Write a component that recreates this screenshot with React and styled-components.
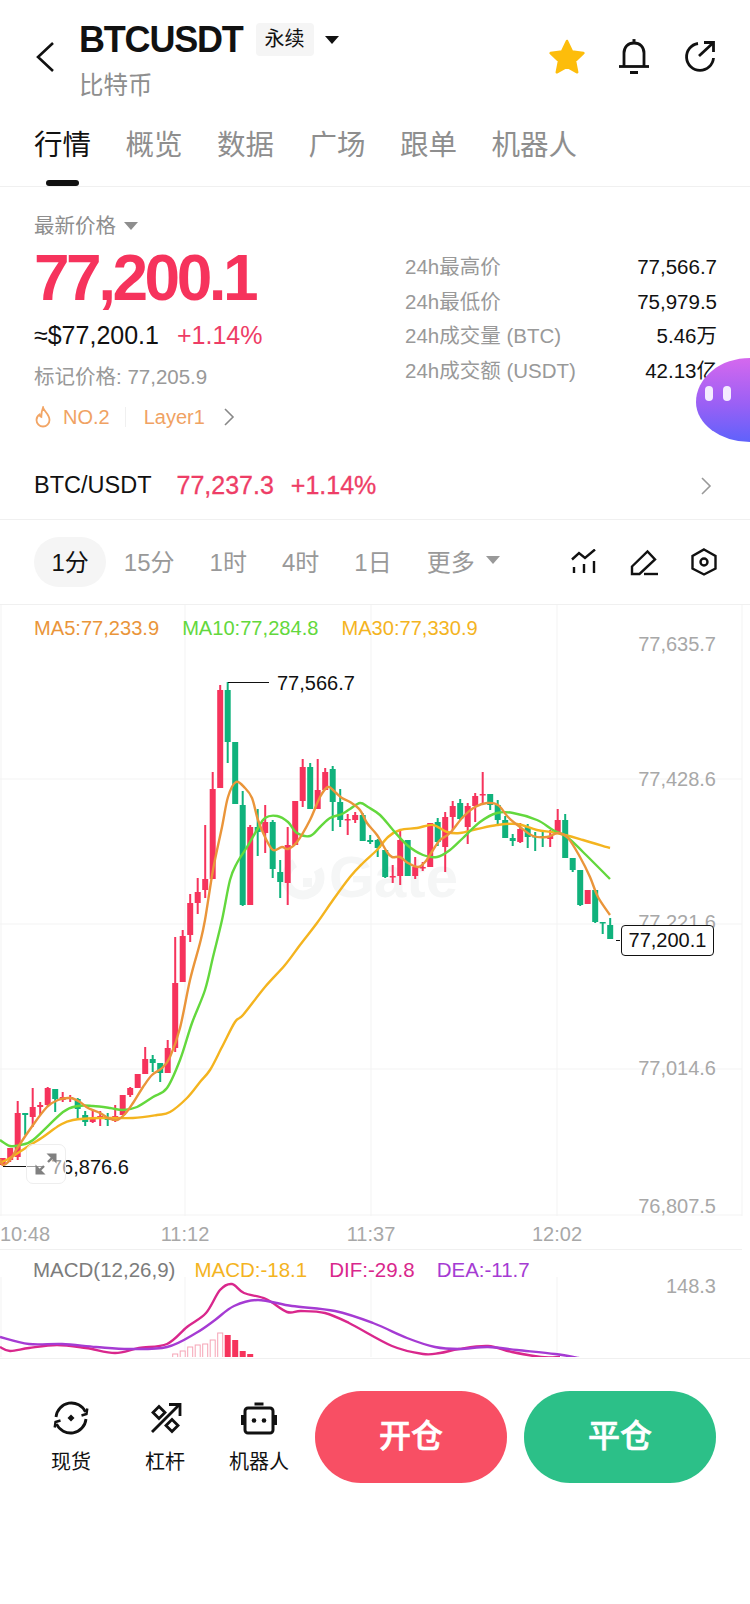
import styled, { createGlobalStyle } from "styled-components";

const RED = "#f6335c";
const GREEN = "#10b27c";
const GRID = "#f3f3f3";

// [colour, wick top, body top, body bottom, wick bottom]
const candles = [
  ["r", 1158, 1158, 1165, 1166], ["r", 1148, 1148, 1160, 1162], ["r", 1101, 1113, 1157, 1160], ["g", 1113, 1113, 1115, 1135],
  ["r", 1088, 1107, 1117, 1127], ["r", 1102, 1105, 1107, 1115], ["r", 1087, 1088, 1105, 1106], ["g", 1089, 1089, 1099, 1112],
  ["r", 1092, 1097, 1100, 1102], ["r", 1095, 1097, 1098, 1102], ["g", 1098, 1099, 1109, 1119], ["g", 1111, 1115, 1122, 1126],
  ["r", 1110, 1118, 1122, 1123], ["r", 1111, 1116, 1118, 1126], ["g", 1113, 1117, 1120, 1126], ["r", 1105, 1116, 1121, 1122],
  ["r", 1095, 1095, 1115, 1115], ["r", 1087, 1088, 1095, 1097], ["r", 1074, 1074, 1088, 1088], ["r", 1047, 1059, 1074, 1074],
  ["g", 1055, 1059, 1063, 1072], ["g", 1063, 1063, 1073, 1082], ["r", 1040, 1048, 1073, 1073], ["r", 937, 983, 1048, 1052],
  ["r", 930, 936, 982, 982], ["r", 894, 903, 935, 942], ["r", 878, 892, 903, 914], ["r", 825, 879, 890, 898],
  ["r", 772, 789, 879, 879], ["r", 685, 690, 788, 788], ["g", 682, 690, 742, 763], ["g", 742, 742, 804, 804],
  ["g", 791, 805, 905, 906], ["r", 825, 827, 905, 905], ["g", 809, 827, 832, 856], ["r", 805, 822, 833, 853],
  ["g", 820, 822, 869, 878], ["g", 860, 872, 882, 898], ["r", 827, 845, 883, 905], ["r", 801, 801, 845, 845],
  ["r", 759, 767, 801, 807], ["g", 763, 767, 809, 809], ["r", 759, 790, 809, 809], ["r", 768, 772, 790, 790],
  ["g", 766, 769, 802, 831], ["g", 789, 802, 820, 827], ["r", 814, 819, 820, 835], ["r", 812, 815, 820, 823],
  ["g", 813, 815, 841, 841], ["g", 835, 840, 842, 844], ["g", 839, 840, 848, 857], ["g", 850, 850, 877, 878],
  ["r", 865, 876, 877, 883], ["r", 830, 840, 876, 885], ["g", 840, 840, 876, 876], ["r", 857, 867, 876, 879],
  ["r", 862, 867, 868, 871], ["r", 823, 823, 867, 867], ["g", 818, 822, 842, 846], ["r", 812, 817, 847, 872],
  ["r", 801, 806, 817, 830], ["g", 799, 803, 819, 820], ["r", 803, 806, 827, 844], ["r", 793, 796, 806, 822],
  ["r", 772, 794, 795, 805], ["g", 794, 794, 805, 810], ["g", 800, 805, 820, 824], ["g", 816, 820, 838, 838],
  ["g", 834, 838, 841, 846], ["r", 823, 829, 842, 843], ["g", 824, 827, 837, 848], ["g", 832, 836, 837, 851],
  ["g", 832, 836, 838, 847], ["r", 830, 836, 839, 847], ["r", 809, 820, 833, 833], ["g", 814, 820, 858, 858],
  ["g", 858, 858, 870, 872], ["g", 870, 870, 905, 906], ["r", 890, 890, 904, 904], ["g", 890, 890, 922, 923],
  ["g", 922, 922, 923, 934], ["g", 918, 925, 939, 939],
];

const ma5 = [
  [0, 1159], [3, 1165], [10, 1160], [18, 1147], [33, 1125], [47, 1107], [58, 1100], [70, 1098], [80, 1102], [88, 1108],
  [100, 1113], [108, 1118], [117, 1120], [125, 1114], [133, 1103], [143, 1087], [152, 1075], [162, 1068], [170, 1057],
  [180, 1028], [190, 980], [200, 943], [205, 920], [213, 870], [222, 827], [228, 797], [236, 782], [245, 788], [252, 798],
  [258, 820], [265, 837], [273, 850], [282, 847], [288, 849], [297, 842], [310, 820], [320, 797], [328, 787], [335, 792],
  [342, 798], [350, 802], [360, 810], [367, 823], [377, 835], [387, 852], [392, 857], [400, 857], [408, 863], [418, 867],
  [425, 862], [433, 850], [440, 840], [450, 833], [463, 817], [475, 807], [487, 803], [498, 805], [508, 817], [520, 827],
  [533, 836], [547, 837], [558, 833], [568, 838], [580, 857], [590, 877], [598, 897], [610, 915],
];

const ma10 = [
  [0, 1140], [10, 1146], [20, 1145], [33, 1140], [63, 1112], [78, 1106], [93, 1106], [110, 1108], [123, 1110], [137, 1107],
  [153, 1097], [167, 1088], [180, 1060], [192, 1023], [205, 990], [213, 957], [222, 920], [230, 880], [237, 863], [247, 847],
  [257, 830], [265, 818], [277, 816], [288, 822], [297, 833], [310, 836], [320, 827], [330, 818], [342, 814], [350, 809],
  [360, 803], [368, 807], [380, 815], [393, 830], [407, 845], [423, 855], [437, 857], [450, 850], [463, 838], [480, 822],
  [497, 813], [513, 813], [537, 820], [553, 830], [567, 837], [583, 852], [610, 879],
];

const ma30 = [
  [0, 1163], [10, 1158], [27, 1147], [43, 1137], [60, 1125], [73, 1120], [100, 1118], [133, 1118], [157, 1115], [170, 1112],
  [187, 1098], [200, 1082], [210, 1070], [222, 1047], [235, 1022], [243, 1015], [265, 987], [285, 965], [300, 945], [317, 923],
  [333, 900], [350, 877], [363, 863], [377, 850], [388, 837], [400, 830], [417, 828], [433, 825], [447, 832], [460, 833],
  [477, 829], [497, 825], [517, 824], [537, 830], [557, 833], [583, 840], [610, 848],
];

const dif = [
  [0, 1347], [10, 1351], [29, 1348], [57, 1345], [86, 1348], [115, 1353], [139, 1348], [167, 1344], [187, 1327], [206, 1313],
  [220, 1290], [232, 1284], [244, 1293], [266, 1299], [287, 1312], [301, 1311], [325, 1313], [349, 1323], [392, 1346], [423, 1354],
  [440, 1353], [459, 1349], [488, 1346], [512, 1352], [541, 1357], [560, 1357],
];

const dea = [
  [0, 1337], [29, 1344], [62, 1344], [96, 1347], [129, 1349], [167, 1347], [196, 1333], [215, 1320], [234, 1306], [258, 1300],
  [292, 1306], [335, 1311], [373, 1323], [407, 1338], [435, 1347], [459, 1349], [488, 1347], [517, 1350], [555, 1354], [579, 1358],
];

const histTops = [1354, 1351, 1347, 1345, 1344, 1340, 1333, 1335, 1340, 1351, 1354, 1357];

const candleX = (i) => 2.7 + i * 7.5;

// catmull-rom through the sampled points
function smooth(pts) {
  let d = `M${pts[0][0]} ${pts[0][1]}`;
  for (let i = 0; i < pts.length - 1; i++) {
    const p0 = pts[i - 1] || pts[i];
    const p1 = pts[i];
    const p2 = pts[i + 1];
    const p3 = pts[i + 2] || p2;
    const c1x = p1[0] + (p2[0] - p0[0]) / 6;
    const c1y = p1[1] + (p2[1] - p0[1]) / 6;
    const c2x = p2[0] - (p3[0] - p1[0]) / 6;
    const c2y = p2[1] - (p3[1] - p1[1]) / 6;
    d += ` C${c1x.toFixed(1)} ${c1y.toFixed(1)} ${c2x.toFixed(1)} ${c2y.toFixed(1)} ${p2[0]} ${p2[1]}`;
  }
  return d;
}

const stats = [
  ["24h最高价", "77,566.7"],
  ["24h最低价", "75,979.5"],
  ["24h成交量 (BTC)", "5.46万"],
  ["24h成交额 (USDT)", "42.13亿"],
];

const tabs = ["行情", "概览", "数据", "广场", "跟单", "机器人"];
const periods = ["1分", "15分", "1时", "4时", "1日"];
const priceLabels = [["77,635.7", 644], ["77,428.6", 779], ["77,221.6", 922], ["77,014.6", 1068], ["76,807.5", 1206]];

function PriceChart() {
  return (
    <ChartSvg viewBox="0 605 750 611" width="750" height="611">
      {[1, 185, 371, 557, 742].map((x) => (
        <line key={x} x1={x} x2={x} y1="605" y2="1216" stroke={GRID} />
      ))}
      {[779, 924, 1069, 1215].map((y) => (
        <line key={y} x1="0" x2="742" y1={y} y2={y} stroke={GRID} />
      ))}

      <circle cx="303" cy="878" r="17" fill="none" stroke="#f5f6f6" strokeWidth="9" strokeDasharray="80 27" transform="rotate(-30 303 878)" />
      <rect x="303" y="878" width="9" height="9" fill="#f5f6f6" />
      <Watermark x="329" y="897">Gate</Watermark>

      {priceLabels.map(([label, y]) => (
        <AxisLabel key={label} x="716" y={y + 7}>{label}</AxisLabel>
      ))}

      {candles.map(([c, wt, bt, bb, wb], i) => (
        <g key={i} fill={c === "r" ? RED : GREEN}>
          <rect x={candleX(i) - 1} y={wt} width="2" height={wb - wt} />
          <rect x={candleX(i) - 3} y={bt} width="6" height={Math.max(bb - bt, 1.5)} />
        </g>
      ))}

      <path d={smooth(ma30)} fill="none" stroke="#f4b41f" strokeWidth="2.4" />
      <path d={smooth(ma10)} fill="none" stroke="#63d83d" strokeWidth="2.4" />
      <path d={smooth(ma5)} fill="none" stroke="#ea953a" strokeWidth="2.4" />

      <line x1="228" x2="269" y1="682.5" y2="682.5" stroke="#111" />
      <MarkLabel x="277" y="690">77,566.7</MarkLabel>
      <line x1="3" x2="44" y1="1166.5" y2="1166.5" stroke="#111" />
      <MarkLabel x="51" y="1174">76,876.6</MarkLabel>
      <line x1="616" x2="620" y1="940.5" y2="940.5" stroke="#111" />
    </ChartSvg>
  );
}

function MacdChart() {
  return (
    <ChartSvg viewBox="0 1250 750 107" width="750" height="107">
      {[1, 185, 371, 557].map((x) => (
        <line key={x} x1={x} x2={x} y1="1277" y2="1358" stroke={GRID} />
      ))}
      <AxisLabel x="716" y="1293">148.3</AxisLabel>
      {histTops.map((top, i) =>
        i < 7 ? (
          <rect key={i} x={candleX(i + 23) - 2.5} y={top} width="5" height={1358 - top} fill="#fff" stroke="#f6a4b6" />
        ) : (
          <rect key={i} x={candleX(i + 23) - 3} y={top} width="6" height={1358 - top} fill={RED} />
        )
      )}
      <path d={smooth(dif)} fill="none" stroke="#d9278c" strokeWidth="2.4" />
      <path d={smooth(dea)} fill="none" stroke="#a53bd3" strokeWidth="2.4" />
    </ChartSvg>
  );
}

export default function App() {
  return (
    <Page>
      <GlobalStyle />

      <TopBar>
        <svg width="18" height="30" viewBox="0 0 18 30" fill="none" stroke="#111" strokeWidth="2.6">
          <path d="M17 1 2 15l15 14" />
        </svg>
        <TitleCol>
          <TitleRow>
            <Symbol>BTCUSDT</Symbol>
            <Badge>永续</Badge>
            <Caret $size={7} $color="#111" />
          </TitleRow>
          <SubTitle>比特币</SubTitle>
        </TitleCol>
        <TopActions>
          <StarIcon width="38" height="36" viewBox="0 0 38 36">
            <path d="M19 3l5 10.6 11.4 1.5-8.4 7.9 2.2 11.3L19 28.7 8.8 34.3 11 23 2.6 15.1 14 13.6z" fill="#fdbd0b" stroke="#fdbd0b" strokeWidth="2.5" strokeLinejoin="round" />
          </StarIcon>
          <svg width="32" height="36" viewBox="0 0 32 36" fill="none" stroke="#111" strokeWidth="2.8">
            <path d="M6 28V15C6 9 10 5 16 5s10 4 10 10v13" />
            <path d="M1 28.5h30" />
            <path d="M14.5 2.5h3" />
            <path d="M12 34.5h8" strokeWidth="3" />
          </svg>
          <svg width="32" height="32" viewBox="0 0 32 32" fill="none" stroke="#111" strokeWidth="2.8">
            <path d="M14 3.5A13.5 13.5 0 1 0 29.5 18" />
            <path d="M15 16 29 3" />
            <path d="M20 2.5h9.5V12" />
          </svg>
        </TopActions>
      </TopBar>

      <TabBar>
        {tabs.map((t, i) => (
          <Tab key={t} $active={i === 0}>{t}</Tab>
        ))}
      </TabBar>

      <PriceSection>
        <PriceCol>
          <PriceCaption>
            最新价格
            <Caret $size={7} $color="#8e8e8e" />
          </PriceCaption>
          <BigPrice>77,200.1</BigPrice>
          <FiatRow>
            <span>≈$77,200.1</span>
            <Change>+1.14%</Change>
          </FiatRow>
          <MarkPrice>标记价格: 77,205.9</MarkPrice>
          <TagRow>
            <svg width="16" height="22" viewBox="0 0 16 22" fill="none" stroke="#f2a565" strokeWidth="1.8">
              <path d="M8 1.5c.6 3.5 6.5 6.5 6.5 12.5a6.5 6.5 0 0 1-13 0C1.5 11.5 3 9.5 4.5 8.5c.3 1.6 1 2.3 1.8 2.5C6.300 7.5 7 4 8 1.5z" />
            </svg>
            <TagText>NO.2</TagText>
            <TagDivider />
            <TagText>Layer1</TagText>
            <svg width="12" height="20" viewBox="0 0 12 20" fill="none" stroke="#888" strokeWidth="1.6">
              <path d="M2 2l8 8-8 8" />
            </svg>
          </TagRow>
        </PriceCol>
        <StatList>
          {stats.map(([k, v]) => (
            <StatRow key={k}>
              <StatKey>{k}</StatKey>
              <StatValue>{v}</StatValue>
            </StatRow>
          ))}
        </StatList>
        <Bot>
          <BotEye />
          <BotEye />
        </Bot>
      </PriceSection>

      <PairRow>
        <PairName>BTC/USDT</PairName>
        <PairPrice>77,237.3</PairPrice>
        <PairPrice>+1.14%</PairPrice>
        <PairChevron width="12" height="20" viewBox="0 0 12 20" fill="none" stroke="#999" strokeWidth="1.6">
          <path d="M2 2l8 8-8 8" />
        </PairChevron>
      </PairRow>

      <PeriodRow>
        {periods.map((p, i) => (
          <Period key={p} $active={i === 0}>{p}</Period>
        ))}
        <Period>
          更多
          <MoreCaret $size={7} $color="#999" />
        </Period>
        <ChartTools>
          <svg width="26" height="26" viewBox="0 0 26 26" fill="none" stroke="#111" strokeWidth="2.4">
            <path d="M1 10.5l7-6.5 6 5 10-8.5" />
            <path d="M3 18v6M13 15v9M23 12v12" />
          </svg>
          <svg width="28" height="28" viewBox="0 0 28 28" fill="none" stroke="#111" strokeWidth="2.4">
            <path d="M2 18.5 17.5 3.5l7.5 8L9.5 26H2z" />
            <path d="M14 26h14" />
          </svg>
          <svg width="26" height="28" viewBox="0 0 26 28" fill="none" stroke="#111" strokeWidth="2.4">
            <path d="M13 1.5 24.5 8v12.5L13 26.5 1.5 20.5V8z" />
            <circle cx="13" cy="14" r="3.5" />
          </svg>
        </ChartTools>
      </PeriodRow>

      <ChartArea>
        <Legend>
          <LegendItem $color="#ea953a">MA5:77,233.9</LegendItem>
          <LegendItem $color="#63d83d">MA10:77,284.8</LegendItem>
          <LegendItem $color="#f4b41f">MA30:77,330.9</LegendItem>
        </Legend>
        <PriceChart />
        <ExpandButton>
          <svg width="24" height="24" viewBox="0 0 24 24" fill="#808080" stroke="#808080" strokeWidth="2.4">
            <path d="M14 10l6-6" fill="none" />
            <path d="M12.5 1.5h10v10z" stroke="none" />
            <path d="M10 14l-6 6" fill="none" />
            <path d="M11.5 22.5h-10v-10z" stroke="none" />
          </svg>
        </ExpandButton>
        <LastPrice>77,200.1</LastPrice>
      </ChartArea>

      <TimeAxis>
        <TimeLabel $first>10:48</TimeLabel>
        <TimeLabel>11:12</TimeLabel>
        <TimeLabel>11:37</TimeLabel>
        <TimeLabel>12:02</TimeLabel>
      </TimeAxis>

      <MacdArea>
        <MacdLegend>
          <LegendItem $color="#7c7c7c">MACD(12,26,9)</LegendItem>
          <LegendItem $color="#f4b41f">MACD:-18.1</LegendItem>
          <LegendItem $color="#d9278c">DIF:-29.8</LegendItem>
          <LegendItem $color="#a53bd3">DEA:-11.7</LegendItem>
        </MacdLegend>
        <MacdChart />
      </MacdArea>

      <BottomBar>
        <ToolItem>
          <svg width="40" height="40" viewBox="0 0 40 40" fill="none" stroke="#111" strokeWidth="2.8">
            <path d="M5 19A15.5 15.5 0 0 1 34.5 14" />
            <path d="M30.5 17.5l5-1.5 .8-5.5" strokeWidth="2.4" />
            <path d="M35 21A15.5 15.5 0 0 1 5.5 26" />
            <path d="M9.5 22.5l-5 1.5-.8 5.5" strokeWidth="2.4" />
            <path d="M20 16.5l3.5 3.5-3.5 3.5-3.5-3.5z" fill="#111" stroke="none" />
          </svg>
          <ToolLabel>现货</ToolLabel>
        </ToolItem>
        <ToolItem>
          <svg width="40" height="40" viewBox="0 0 40 40" fill="none" stroke="#111" strokeWidth="2.8">
            <path d="M7 34 34 7" />
            <path d="M24 6.5h11V18" />
            <path d="M14 8.5l6 6-6 6-6-6z" />
            <path d="M27 21.5l6 6-6 6-6-6z" />
          </svg>
          <ToolLabel>杠杆</ToolLabel>
        </ToolItem>
        <ToolItem>
          <svg width="40" height="40" viewBox="0 0 40 40" fill="none" stroke="#111" strokeWidth="3">
            <rect x="6" y="10" width="28" height="25" rx="3" />
            <path d="M15.5 6h9" />
            <path d="M3.5 17v10M36.5 17v10" />
            <circle cx="15" cy="22.5" r="2.3" fill="#111" stroke="none" />
            <circle cx="25" cy="22.5" r="2.3" fill="#111" stroke="none" />
          </svg>
          <ToolLabel>机器人</ToolLabel>
        </ToolItem>
        <TradeButton $color="#f84f64">开仓</TradeButton>
        <TradeButton $color="#2cc088">平仓</TradeButton>
      </BottomBar>
    </Page>
  );
}

const GlobalStyle = createGlobalStyle`
  html, body {
    margin: 0;
    padding: 0;
    background: #ffffff;
  }
  body {
    font-family: "Liberation Sans", "Noto Sans CJK SC", sans-serif;
    color: #111111;
  }
`;

const Page = styled.div`
  width: 750px;
  height: 1604px;
  overflow: hidden;
  background: #ffffff;
  display: flex;
  flex-direction: column;
`;

const TopBar = styled.header`
  display: flex;
  height: 112px;
  box-sizing: border-box;
  padding: 23px 34px 0 36px;

  > svg {
    margin-top: 19px;
  }
`;

const TitleCol = styled.div`
  margin-left: 25px;
`;

const TitleRow = styled.div`
  display: flex;
  align-items: center;
  height: 33px;
`;

const Symbol = styled.div`
  font-size: 36px;
  font-weight: 700;
  letter-spacing: -1.2px;
  line-height: 33px;
`;

const Badge = styled.div`
  margin-left: 13px;
  margin-right: 3px;
  width: 58px;
  height: 33px;
  line-height: 33px;
  border-radius: 4px;
  background: #f5f5f5;
  font-size: 20px;
  text-align: center;
`;

const Caret = styled.i`
  display: inline-block;
  width: 0;
  height: 0;
  margin-left: 8px;
  border-left: ${(p) => p.$size}px solid transparent;
  border-right: ${(p) => p.$size}px solid transparent;
  border-top: ${(p) => p.$size * 1.2}px solid ${(p) => p.$color};
`;

const MoreCaret = styled(Caret)`
  margin-left: 11px;
`;

const SubTitle = styled.div`
  margin-top: 13px;
  font-size: 24.5px;
  line-height: 34px;
  color: #8e8e8e;
`;

const TopActions = styled.div`
  margin-left: auto;
  margin-top: 15px;
  height: 36px;
  display: flex;
  align-items: center;
  gap: 34px;
`;

const StarIcon = styled.svg`
  margin-right: -2px;
`;

const TabBar = styled.nav`
  display: flex;
  gap: 34.5px;
  height: 75px;
  box-sizing: border-box;
  padding-left: 34px;
  border-bottom: 1px solid #f0f0f0;
`;

const Tab = styled.div`
  position: relative;
  padding-top: 13px;
  font-size: 28.5px;
  line-height: 40px;
  color: ${(p) => (p.$active ? "#111111" : "#8e8e8e")};

  &::after {
    content: "";
    display: ${(p) => (p.$active ? "block" : "none")};
    position: absolute;
    left: 12px;
    bottom: 0;
    width: 33px;
    height: 6px;
    border-radius: 3px;
    background: #111111;
  }
`;

const PriceSection = styled.section`
  position: relative;
  display: flex;
  justify-content: space-between;
  height: 265px;
  box-sizing: border-box;
  padding: 25px 33px 0 34px;
`;

const PriceCol = styled.div`
  display: flex;
  flex-direction: column;
`;

const PriceCaption = styled.div`
  display: flex;
  align-items: center;
  font-size: 20.5px;
  line-height: 28px;
  color: #8e8e8e;
`;

const BigPrice = styled.div`
  margin-top: 2px;
  font-size: 64px;
  line-height: 72px;
  font-weight: 700;
  letter-spacing: -3.5px;
  color: ${RED};
`;

const FiatRow = styled.div`
  display: flex;
  gap: 18px;
  margin-top: 5px;
  font-size: 25px;
  line-height: 32px;
`;

const Change = styled.span`
  color: #ee3d66;
`;

const MarkPrice = styled.div`
  margin-top: 12px;
  font-size: 20.5px;
  line-height: 28px;
  color: #999999;
`;

const TagRow = styled.div`
  display: flex;
  align-items: center;
  height: 28px;
  margin-top: 12px;
  padding-left: 1px;

  > svg:last-child {
    margin-left: 18px;
  }
`;

const TagText = styled.span`
  margin-left: 12px;
  font-size: 20px;
  color: #f0a263;

  & + & {
    margin-left: 17px;
  }
`;

const TagDivider = styled.i`
  width: 1px;
  height: 20px;
  margin-left: 15px;
  margin-right: 6px;
  background: #f0f0f0;
`;

const StatList = styled.div`
  width: 312px;
  margin-top: 38px;
`;

const StatRow = styled.div`
  display: flex;
  justify-content: space-between;
  height: 34.6px;
  line-height: 34px;
  font-size: 20.5px;
`;

const StatKey = styled.span`
  color: #999999;
`;

const StatValue = styled.span`
  color: #111111;
`;

const Bot = styled.div`
  position: absolute;
  right: 0;
  top: 171px;
  width: 54px;
  height: 84px;
  box-sizing: border-box;
  padding: 28px 0 0 9px;
  display: flex;
  gap: 10px;
  border-radius: 54px 0 0 54px / 44px 0 0 40px;
  background: linear-gradient(180deg, #d568ee 0%, #9a60f5 55%, #5f62fb 100%);
`;

const BotEye = styled.i`
  width: 8px;
  height: 15px;
  border-radius: 4px;
  background: #f4ecff;
`;

const PairRow = styled.div`
  display: flex;
  align-items: center;
  height: 68px;
  box-sizing: border-box;
  padding: 0 38px 0 34px;
  border-bottom: 1px solid #f0f0f0;
`;

const PairName = styled.span`
  margin-right: 8px;
  font-size: 23.5px;
`;

const PairPrice = styled.span`
  margin-left: 17px;
  font-size: 25px;
  color: #ee3d66;
  -webkit-text-stroke: 0.3px #ee3d66;
`;

const PairChevron = styled.svg`
  margin-left: auto;
`;

const PeriodRow = styled.div`
  display: flex;
  align-items: center;
  height: 85px;
  box-sizing: border-box;
  padding: 0 33px 0 34px;
  border-bottom: 1px solid #f0f0f0;
`;

const Period = styled.div`
  display: flex;
  align-items: center;
  height: 50px;
  box-sizing: border-box;
  padding: 0 17.5px 4px;
  border-radius: 25px;
  font-size: 24px;
  color: ${(p) => (p.$active ? "#111111" : "#999999")};
  background: ${(p) => (p.$active ? "#f5f5f5" : "transparent")};
`;

const ChartTools = styled.div`
  margin-left: auto;
  display: flex;
  align-items: center;
  gap: 33px;
`;

const ChartArea = styled.div`
  position: relative;
  height: 611px;
`;

const ChartSvg = styled.svg`
  display: block;
`;

const Legend = styled.div`
  position: absolute;
  top: 9px;
  left: 34px;
  display: flex;
  gap: 23px;
  font-size: 20.1px;
  line-height: 28px;
`;

const LegendItem = styled.span`
  color: ${(p) => p.$color};
`;

const AxisLabel = styled.text`
  font-size: 20px;
  fill: #a8a8a8;
  text-anchor: end;
`;

const MarkLabel = styled.text`
  font-size: 20px;
  fill: #111111;
`;

const Watermark = styled.text`
  font-size: 58px;
  font-weight: 700;
  fill: #f5f6f6;
`;

const ExpandButton = styled.div`
  position: absolute;
  left: 26px;
  top: 539px;
  width: 40px;
  height: 40px;
  box-sizing: border-box;
  display: flex;
  align-items: center;
  justify-content: center;
  border: 1px solid #eeeeee;
  border-radius: 7px;
  background: rgba(255, 255, 255, 0.6);
`;

const LastPrice = styled.div`
  position: absolute;
  left: 621px;
  top: 320px;
  width: 93px;
  height: 31px;
  box-sizing: border-box;
  border: 1px solid #111111;
  border-radius: 4px;
  background: #ffffff;
  font-size: 20px;
  line-height: 29px;
  text-align: center;
`;

const TimeAxis = styled.div`
  display: flex;
  height: 34px;
  box-sizing: border-box;
  border-bottom: 1px solid #f0f0f0;
  width: 742px;
`;

const TimeLabel = styled.div`
  flex: 0 0 ${(p) => (p.$first ? "92px" : "186px")};
  font-size: 20px;
  line-height: 36px;
  text-align: ${(p) => (p.$first ? "left" : "center")};
  color: #a8a8a8;
`;

const MacdArea = styled.div`
  position: relative;
  height: 108px;
  border-bottom: 1px solid #f0f0f0;
`;

const MacdLegend = styled.div`
  position: absolute;
  top: 6px;
  left: 33px;
  display: flex;
  gap: 22px;
  font-size: 20.5px;
  line-height: 28px;

  > span:first-child {
    margin-right: -3px;
  }
`;

const BottomBar = styled.div`
  display: flex;
  align-items: flex-start;
  padding: 32px 0 0 24px;
`;

const ToolItem = styled.div`
  width: 94px;
  display: flex;
  flex-direction: column;
  align-items: center;
  padding-top: 7px;
`;

const ToolLabel = styled.span`
  margin-top: 10px;
  font-size: 20px;
  line-height: 28px;
  white-space: nowrap;
`;

const TradeButton = styled.div`
  width: 192px;
  height: 92px;
  margin-left: ${(p) => (p.$color === "#f84f64" ? "9px" : "17px")};
  border-radius: 46px;
  background: ${(p) => p.$color};
  color: #ffffff;
  font-size: 32px;
  font-weight: 500;
  -webkit-text-stroke: 0.6px #ffffff;
  line-height: 90px;
  text-align: center;
`;
